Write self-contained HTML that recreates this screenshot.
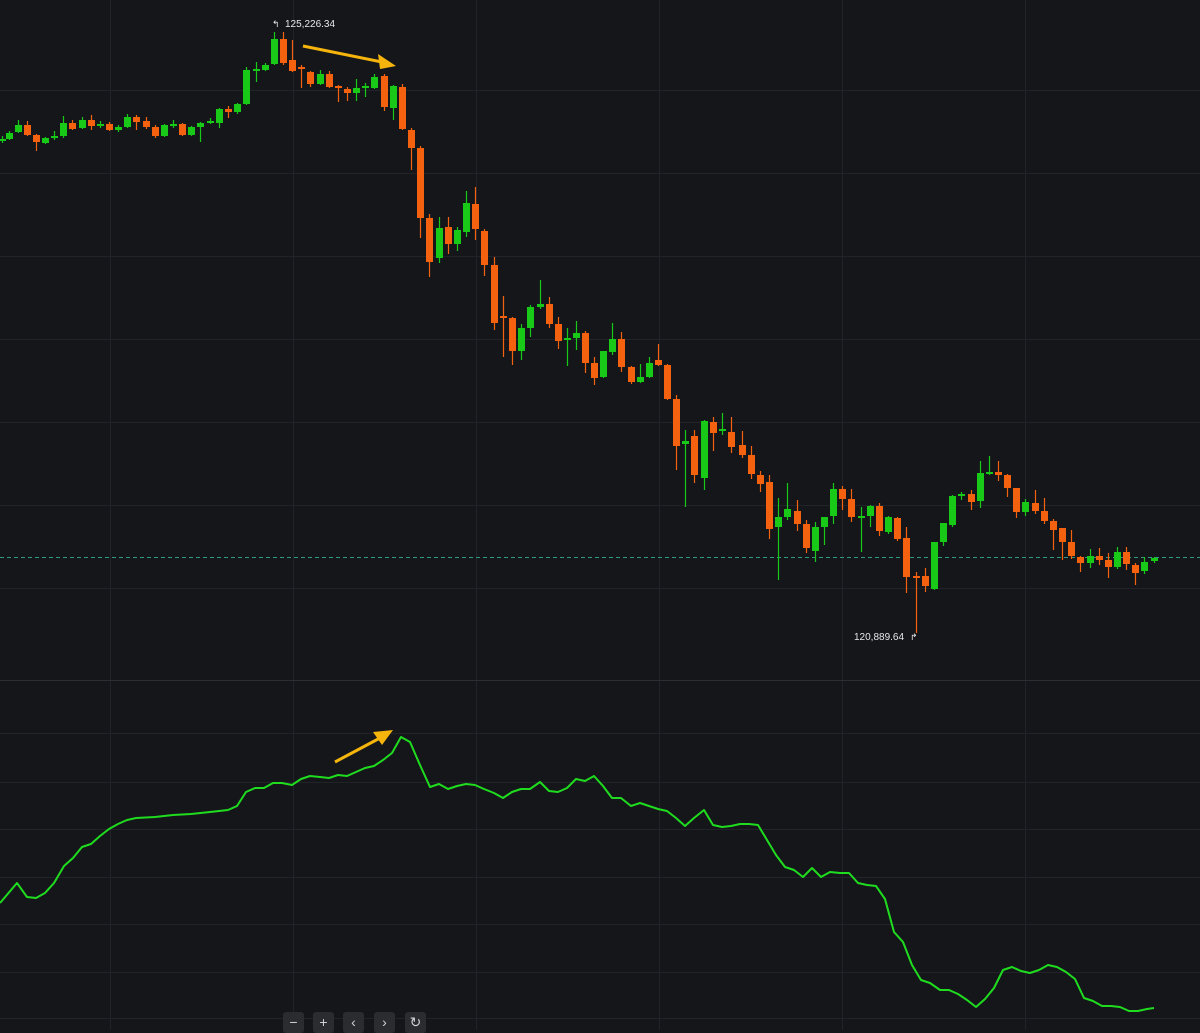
<!DOCTYPE html>
<html><head><meta charset="utf-8"><style>
html,body{margin:0;padding:0;background:#15161a;width:1200px;height:1030px;overflow:hidden}
svg{display:block}
.btn{position:absolute;top:1012px;width:21px;height:21px;background:#2a2c30;border-radius:3px;color:#d0d2d6;font:14px "Liberation Sans",sans-serif;text-align:center;line-height:20px}
</style></head><body>
<svg id="s" width="1200" height="1030" xmlns="http://www.w3.org/2000/svg">
<rect width="1200" height="1030" fill="#15161a"/>
<g stroke="#212328" stroke-width="1" id="grid"></g>
<line x1="0" y1="680.5" x2="1200" y2="680.5" stroke="#2c2e33"/>
<line x1="0" y1="557.5" x2="1200" y2="557.5" stroke="#2f9a84" stroke-dasharray="4,3"/>
<g id="c"></g>
<polyline id="ln" fill="none" stroke="#1fdc1f" stroke-width="2" stroke-linejoin="round"/>
<g fill="#f5b50c" stroke="#f5b50c">
<line x1="303" y1="46" x2="382" y2="62" stroke-width="3"/>
<polygon points="396,66 378,54 380,69" stroke="none"/>
<line x1="335" y1="762" x2="380" y2="738" stroke-width="3"/>
<polygon points="393,730 373,732 382,745" stroke="none"/>
</g>
<text x="285" y="27" fill="#e8e8ea" font-family="Liberation Sans,sans-serif" font-size="10">125,226.34</text>
<text x="272" y="27" fill="#e8e8ea" font-family="Liberation Sans,sans-serif" font-size="9">↰</text>
<text x="854" y="640" fill="#e8e8ea" font-family="Liberation Sans,sans-serif" font-size="10">120,889.64</text>
<text x="910" y="640" fill="#e8e8ea" font-family="Liberation Sans,sans-serif" font-size="9">↱</text>
</svg>
<div class="btn" style="left:283px">−</div>
<div class="btn" style="left:313px">+</div>
<div class="btn" style="left:343px">‹</div>
<div class="btn" style="left:374px">›</div>
<div class="btn" style="left:405px">↻</div>
<script>
var NS="http://www.w3.org/2000/svg";
function el(t,a,p){var e=document.createElementNS(NS,t);for(var k in a)e.setAttribute(k,a[k]);p.appendChild(e);return e;}
var g=document.getElementById('grid');
[90,173,256,339,422,505,588,733,782,829,877,924,972,1018].forEach(function(y){el('line',{x1:0,x2:1200,y1:y+.5,y2:y+.5},g)});
[110,293,476,659,842,1025].forEach(function(x){el('line',{x1:x+.5,x2:x+.5,y1:0,y2:1030},g)});
var C=[
[2,139,141,136,143,1],[9,133,139,131,140,1],[18,125,132,120,133,1],[27,125,135,121,136,0],[36,135,142,134,151,0],[45,138,143,137,144,1],[54,136,138,131,140,1],
[63,123,136,116,138,1],[72,123,129,120,130,0],[82,120,128,117,129,1],[91,120,126,115,130,0],[100,124,126,121,128,1],[109,124,130,122,131,0],[118,127,130,125,132,1],
[127,117,127,114,128,1],[136,117,122,115,130,0],[146,121,127,117,129,0],[155,127,136,125,138,0],[164,125,136,124,137,1],[173,124,126,120,128,1],[182,124,135,123,136,0],
[191,127,135,126,136,1],[200,123,127,122,142,1],[210,121,123,118,124,1],[219,109,123,108,128,1],[228,109,112,106,118,0],[237,104,112,103,114,1],[246,70,104,67,105,1],
[256,69,71,62,82,1],[265,65,70,63,71,1],[274,39,64,32,65,1],[283,39,63,32,65,0],[292,60,71,40,72,0],[301,67,69,65,88,0],[310,72,84,71,87,0],[320,74,84,70,85,1],
[329,74,87,71,88,0],[338,86,88,85,102,0],[347,89,93,87,101,0],[356,88,93,79,101,1],[365,86,88,83,97,1],[374,77,88,74,89,1],[384,76,107,74,111,0],[393,86,108,85,120,1],
[402,87,129,84,130,0],[411,130,148,128,170,0],[420,148,218,146,238,0],[429,218,262,214,277,0],[439,228,258,217,263,1],[448,227,244,217,254,0],[457,230,244,227,251,1],
[466,203,232,191,237,1],[475,204,229,187,240,0],[484,231,265,229,276,0],[494,265,323,257,330,0],[503,316,318,296,357,0],[512,318,351,317,365,0],[521,328,351,324,360,1],
[530,307,328,305,337,1],[540,304,307,280,309,1],[549,304,324,297,328,0],[558,324,341,317,349,0],[567,338,340,328,366,1],[576,333,338,321,350,1],[585,333,363,331,373,0],
[594,363,378,357,385,0],[603,351,377,351,378,1],[612,339,352,323,355,1],[621,339,367,332,372,0],[631,367,382,366,384,0],[640,377,382,364,383,1],[649,363,377,357,378,1],
[658,360,365,344,366,0],[667,365,399,364,400,0],[676,399,446,395,470,0],[685,441,444,430,507,1],[694,436,475,430,483,0],[704,421,478,420,490,1],[713,422,433,417,451,0],
[722,429,431,413,435,1],[731,432,447,417,453,0],[742,445,455,431,458,0],[751,455,474,446,479,0],[760,475,484,471,492,0],[769,482,529,475,539,0],[778,517,527,498,580,1],
[787,509,517,483,520,1],[797,511,524,500,531,0],[806,524,548,520,553,0],[815,527,551,522,562,1],[824,517,527,520,545,1],[833,489,516,483,524,1],[842,489,499,486,510,0],
[851,499,517,489,522,0],[861,516,518,507,552,1],[870,506,516,505,527,1],[879,506,531,503,536,0],[888,517,532,516,534,1],[897,518,539,517,541,0],[906,538,577,527,593,0],
[916,576,578,572,633,0],[925,576,586,568,592,0],[934,542,589,542,590,1],[943,523,542,535,546,1],[952,496,525,495,527,1],[961,494,496,492,500,1],[971,494,502,490,510,0],
[980,473,501,461,508,1],[989,472,474,456,475,1],[998,472,475,461,481,0],[1007,475,488,474,497,0],[1016,488,512,490,518,0],[1025,502,512,499,516,1],[1035,503,511,490,514,0],
[1044,511,521,498,524,0],[1053,521,530,519,550,0],[1062,528,542,530,560,0],[1071,542,556,530,559,0],[1080,557,563,556,572,0],[1090,556,563,549,568,1],[1099,556,560,548,565,0],
[1108,560,567,553,578,0],[1117,552,567,547,569,1],[1126,552,564,547,570,0],[1135,565,573,563,585,0],[1144,562,571,557,574,1],[1154,558,561,557,563,1]];
var cg=document.getElementById('c');
C.forEach(function(c){var col=c[5]?'#18c918':'#f4620f';
el('line',{x1:c[0]+.5,x2:c[0]+.5,y1:c[3],y2:c[4],stroke:col,'stroke-width':1.2},cg);
el('rect',{x:c[0]-3,y:c[1],width:7,height:Math.max(2,c[2]-c[1]),fill:col},cg);});
var P=[[0,903],[17,883],[27,897],[36,898],[45,893],[54,883],[64,866],[73,858],[82,847],[91,844],[100,836],[109,829],[118,824],[127,820],[136,818],[155,817],[173,815],[191,814],[210,812],[228,810],[237,806],[246,792],[255,788],[264,788],[273,783],[282,783],[292,785],[301,779],[310,776],[320,777],[329,778],[338,775],[347,776],[356,772],[365,768],[374,766],[383,760],[392,753],[401,737],[410,742],[420,765],[430,787],[439,784],[448,789],[457,786],[466,784],[475,785],[484,789],[494,793],[503,798],[512,792],[521,789],[530,789],[540,782],[549,791],[558,792],[567,788],[576,779],[585,781],[594,776],[603,786],[612,798],[621,798],[631,806],[640,803],[649,806],[658,809],[667,811],[676,818],[685,826],[694,818],[704,810],[713,825],[722,827],[731,826],[740,824],[749,824],[758,825],[767,840],[776,855],[785,867],[794,870],[803,877],[812,868],[821,877],[830,872],[840,873],[849,873],[858,883],[867,885],[876,886],[885,899],[894,932],[903,942],[912,965],[921,980],[930,983],[940,990],[949,990],[958,994],[967,1000],[976,1007],[985,999],[994,988],[1003,970],[1012,967],[1021,971],[1030,973],[1039,970],[1048,965],[1057,967],[1066,972],[1075,979],[1084,998],[1093,1001],[1102,1006],[1111,1006],[1120,1007],[1129,1011],[1138,1011],[1147,1009],[1154,1008]];
document.getElementById('ln').setAttribute('points',P.map(function(p){return p.join(',')}).join(' '));
</script>
</body></html>
